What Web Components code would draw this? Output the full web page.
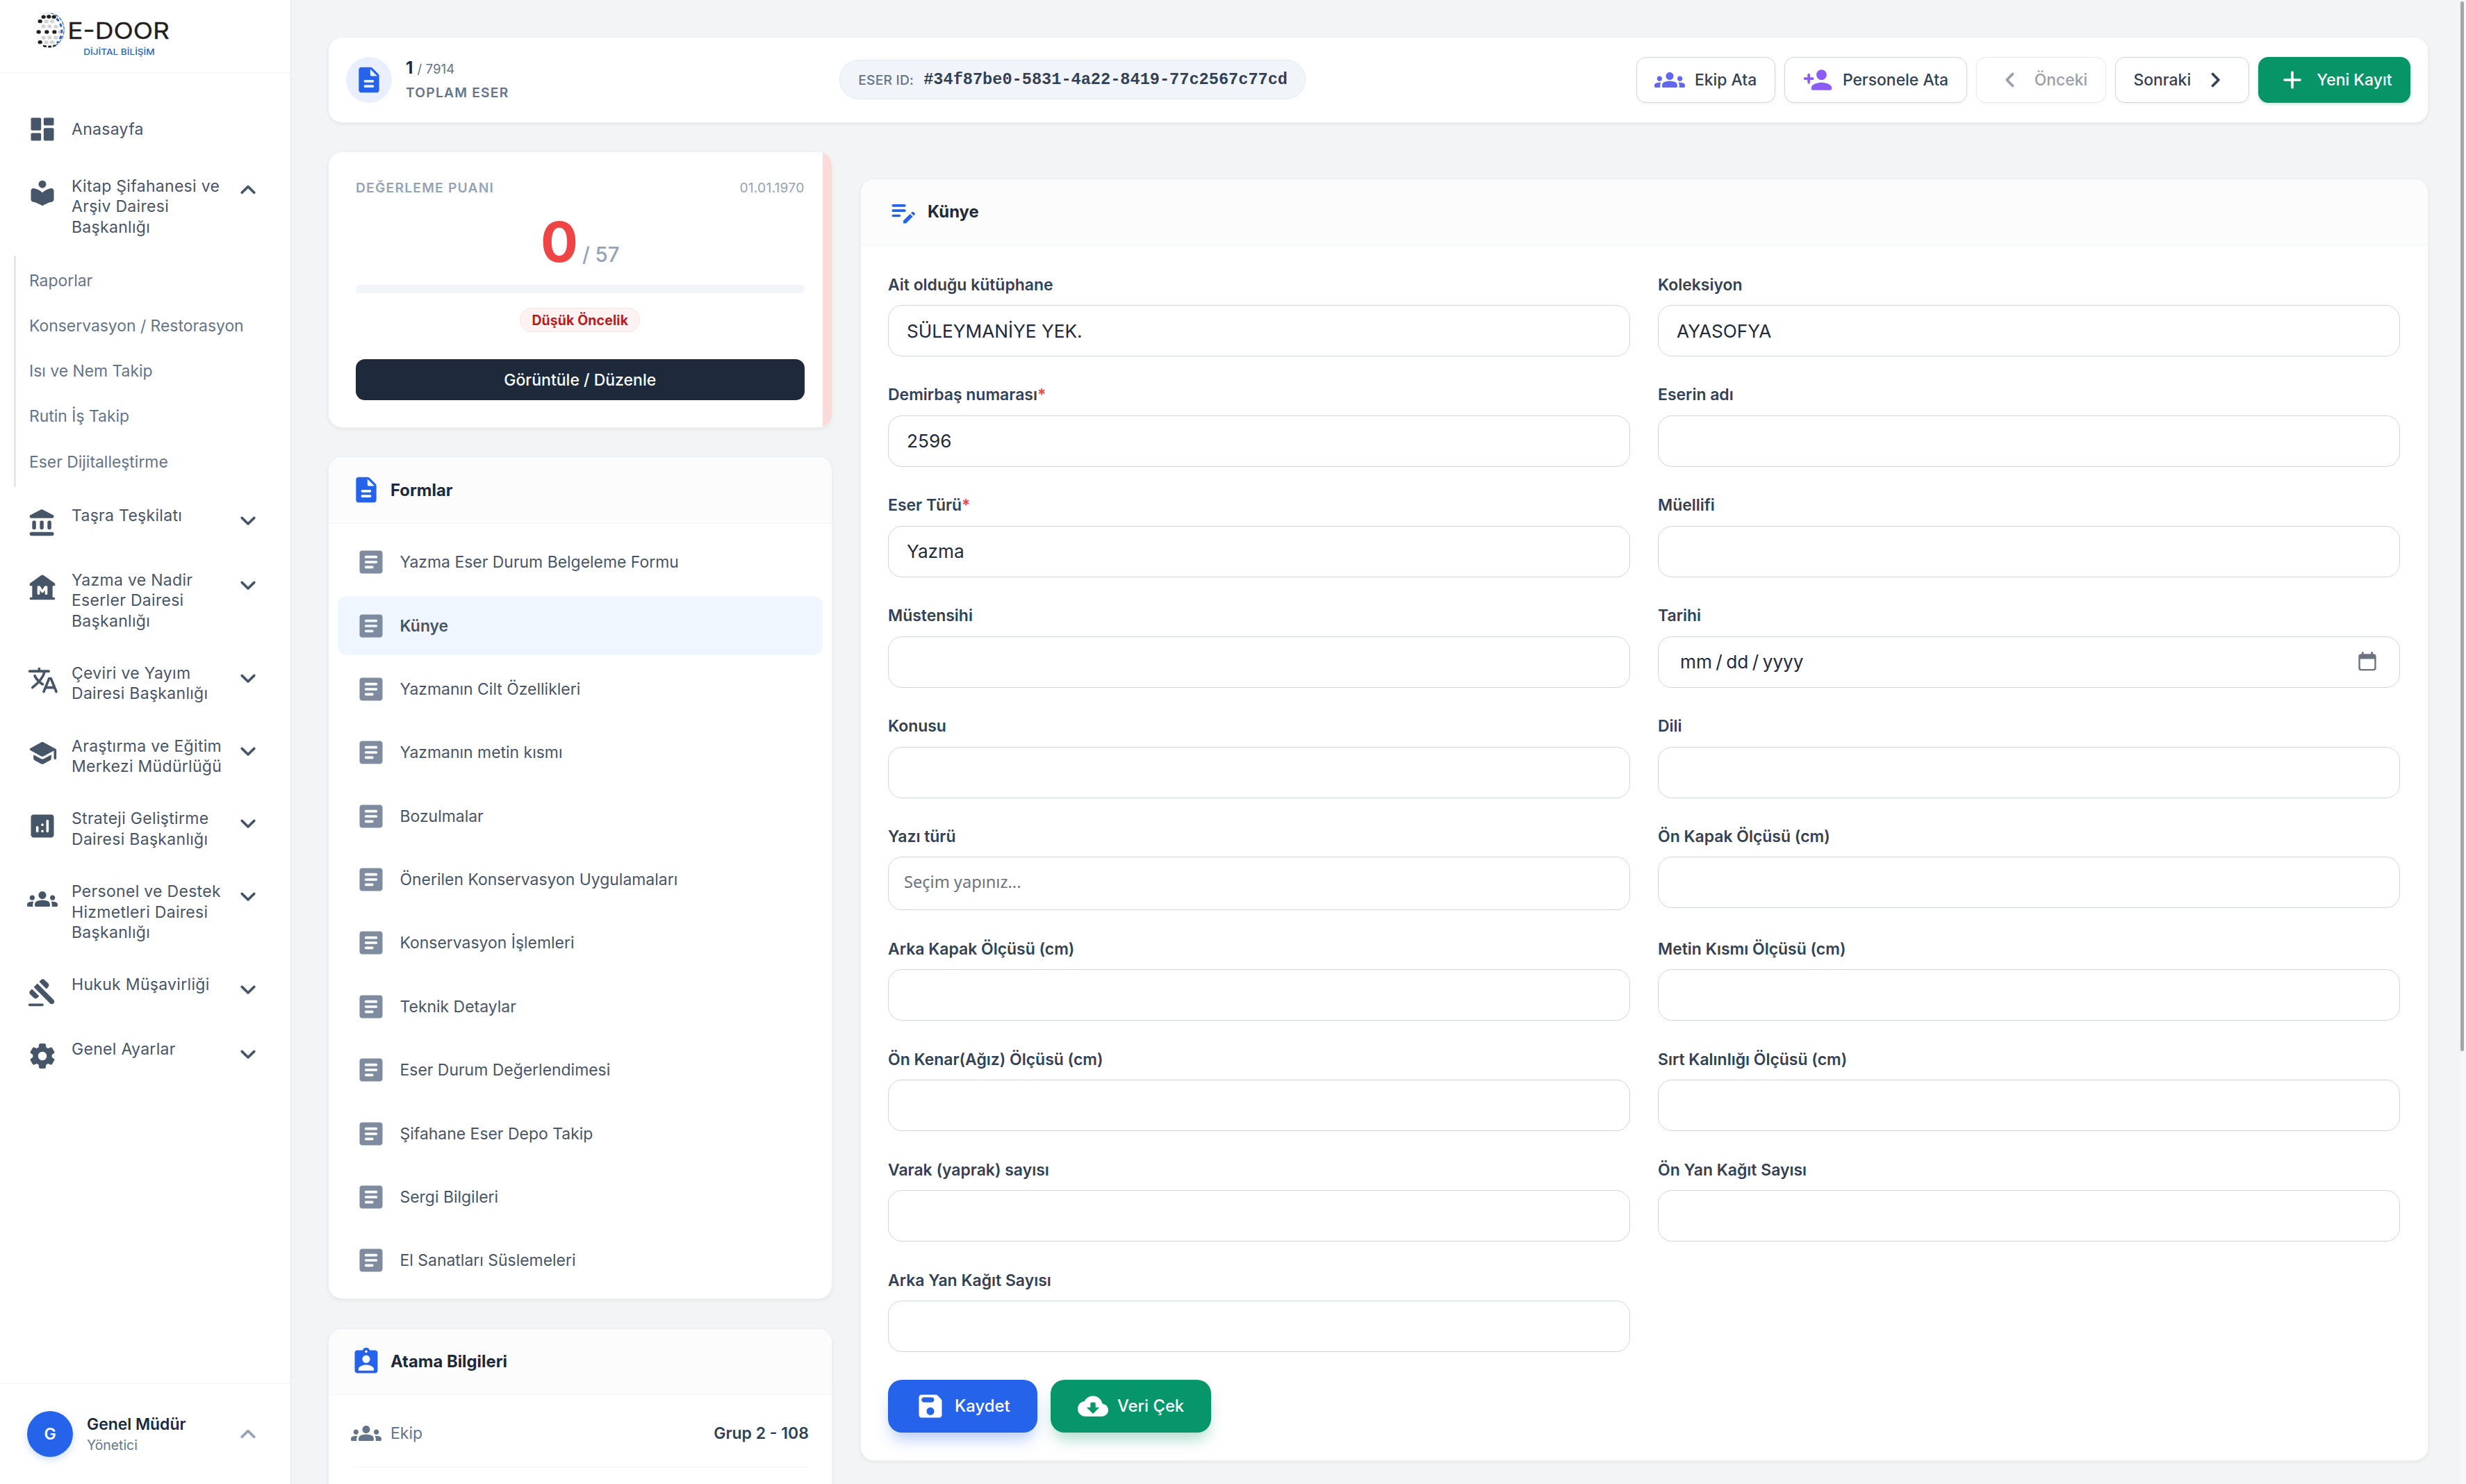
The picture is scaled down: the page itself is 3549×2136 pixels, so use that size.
<!DOCTYPE html>
<html lang="tr"><head><meta charset="utf-8"><title>Künye</title>
<style>
html,body{margin:0;height:100%}
body{background:#f3f4f6;font-family:Inter,"Liberation Sans",sans-serif;overflow:hidden;color:#1e293b}
</style></head>
<body>
<app-shell>
  <side-bar slot="side">
    <nav-item icon="dashboard" single>Anasayfa</nav-item>
    <nav-item icon="library" open>Kitap Şifahanesi ve Arşiv Dairesi Başkanlığı</nav-item>
    <nav-sub>
      <a>Raporlar</a><a>Konservasyon / Restorasyon</a><a>Isı ve Nem Takip</a><a>Rutin İş Takip</a><a>Eser Dijitalleştirme</a>
    </nav-sub>
    <nav-item icon="bank">Taşra Teşkilatı</nav-item>
    <nav-item icon="museum">Yazma ve Nadir Eserler Dairesi Başkanlığı</nav-item>
    <nav-item icon="translate">Çeviri ve Yayım Dairesi Başkanlığı</nav-item>
    <nav-item icon="school">Araştırma ve Eğitim Merkezi Müdürlüğü</nav-item>
    <nav-item icon="analytics">Strateji Geliştirme Dairesi Başkanlığı</nav-item>
    <nav-item icon="groups">Personel ve Destek Hizmetleri Dairesi Başkanlığı</nav-item>
    <nav-item icon="gavel">Hukuk Müşavirliği</nav-item>
    <nav-item icon="settings">Genel Ayarlar</nav-item>
  </side-bar>
  <record-bar slot="bar"></record-bar>
  <score-card slot="left"></score-card>
  <panel-card slot="left" icon="description" heading="Formlar">
    <form-list>
      <form-link>Yazma Eser Durum Belgeleme Formu</form-link>
      <form-link active>Künye</form-link>
      <form-link>Yazmanın Cilt Özellikleri</form-link>
      <form-link>Yazmanın metin kısmı</form-link>
      <form-link>Bozulmalar</form-link>
      <form-link>Önerilen Konservasyon Uygulamaları</form-link>
      <form-link>Konservasyon İşlemleri</form-link>
      <form-link>Teknik Detaylar</form-link>
      <form-link>Eser Durum Değerlendimesi</form-link>
      <form-link>Şifahane Eser Depo Takip</form-link>
      <form-link>Sergi Bilgileri</form-link>
      <form-link>El Sanatları Süslemeleri</form-link>
    </form-list>
  </panel-card>
  <panel-card slot="left" icon="assignment" heading="Atama Bilgileri">
    <info-row icon="groups" label="Ekip">Grup 2 - 108</info-row>
  </panel-card>
  <panel-card slot="main" wide icon="editnote" heading="Künye">
    <form-grid>
      <form-field label="Ait olduğu kütüphane">SÜLEYMANİYE YEK.</form-field>
      <form-field label="Koleksiyon">AYASOFYA</form-field>
      <form-field label="Demirbaş numarası" required>2596</form-field>
      <form-field label="Eserin adı"></form-field>
      <form-field label="Eser Türü" required>Yazma</form-field>
      <form-field label="Müellifi"></form-field>
      <form-field label="Müstensihi"></form-field>
      <form-field label="Tarihi" kind="date">mm / dd / yyyy</form-field>
      <form-field label="Konusu"></form-field>
      <form-field label="Dili"></form-field>
      <form-field label="Yazı türü" kind="select">Seçim yapınız...</form-field>
      <form-field label="Ön Kapak Ölçüsü (cm)"></form-field>
      <form-field label="Arka Kapak Ölçüsü (cm)"></form-field>
      <form-field label="Metin Kısmı Ölçüsü (cm)"></form-field>
      <form-field label="Ön Kenar(Ağız) Ölçüsü (cm)"></form-field>
      <form-field label="Sırt Kalınlığı Ölçüsü (cm)"></form-field>
      <form-field label="Varak (yaprak) sayısı"></form-field>
      <form-field label="Ön Yan Kağıt Sayısı"></form-field>
      <form-field label="Arka Yan Kağıt Sayısı"></form-field>
    </form-grid>
    <form-actions>
      <action-button icon="save">Kaydet</action-button>
      <action-button icon="cloud" green>Veri Çek</action-button>
    </form-actions>
  </panel-card>
</app-shell>
<script>
const ICONS = {
  dashboard: '<rect x="3" y="3" width="8" height="10" rx="1"/><rect x="3" y="15" width="8" height="6" rx="1"/><rect x="13" y="11" width="8" height="10" rx="1"/><rect x="13" y="3" width="8" height="6" rx="1"/>',
  library: '<circle cx="12" cy="5" r="3"/><path d="M12 11.55c-1.82-1.7-4.12-2.89-6.68-3.35C4.11 8 3 8.98 3 10.22v6.7c0 1.04.8 1.85 1.83 1.97 2.54.3 5 1.8 7.17 3.1 2.17-1.3 4.63-2.8 7.17-3.1 1.03-.12 1.83-.93 1.83-1.97v-6.7c0-1.24-1.11-2.22-2.32-2.02-2.56.46-4.86 1.65-6.68 3.35z"/>',
  bank: '<rect x="4" y="10" width="3" height="7" rx="1.5"/><rect x="10" y="10" width="3" height="7" rx="1.5"/><rect x="16" y="10" width="3" height="7" rx="1.5"/><rect x="2" y="19" width="19" height="3" rx="1.5"/><path d="M10.57 1.49l-7.9 4.16c-.41.21-.67.64-.67 1.1C2 7.44 2.56 8 3.25 8h16.51C20.44 8 21 7.44 21 6.75c0-.46-.26-.89-.67-1.1l-7.9-4.16c-.58-.31-1.28-.31-1.86 0z"/>',
  museum: '<path fill-rule="evenodd" d="M22 10.4V9.8c0-.4-.2-.7-.5-.9L12.9 2.7c-.5-.4-1.2-.4-1.8 0L2.5 8.9c-.3.2-.5.5-.5.9v.6c0 .4.3.7.7.7H4V20H3c-.6 0-1 .4-1 1s.4 1 1 1h18c.6 0 1-.4 1-1s-.4-1-1-1h-1v-8.9h1.3c.4 0 .7-.3.7-.7zM15 18c-.55 0-1-.45-1-1v-2.7l-1.17 1.75c-.4.6-1.27.6-1.66 0L10 14.3V17c0 .55-.45 1-1 1s-1-.45-1-1v-5c0-.55.45-1 1-1h.5c.3 0 .6.2.8.4L12 14l1.7-2.6c.2-.2.5-.4.8-.4h.5c.55 0 1 .45 1 1v5c0 .55-.45 1-1 1z"/>',
  translate: '<path d="M2 5h15M9.5 3v2M13.7 5.5C12.7 9.5 9 14 4.2 17.8M6 8.6c1.6 3 3.6 5 6.2 6.6" fill="none" stroke="currentColor" stroke-width="2" stroke-linecap="round"/><path d="M13.1 21l4.2-10.3h1.4L22.9 21M14.8 17.8h6.5" fill="none" stroke="currentColor" stroke-width="2" stroke-linecap="round" stroke-linejoin="round"/>',
  school: '<path d="M5 13.18v2.81c0 .73.4 1.41 1.04 1.76l5 2.73c.6.33 1.32.33 1.92 0l5-2.73c.64-.35 1.04-1.03 1.04-1.76v-2.81l-6.04 3.3c-.6.33-1.32.33-1.92 0L5 13.18zm6.04-9.66l-8.43 4.6c-.69.38-.69 1.38 0 1.76l8.43 4.6c.6.33 1.32.33 1.92 0L21 10.09V16c0 .55.45 1 1 1s1-.45 1-1V9.59c0-.37-.2-.7-.52-.88l-9.52-5.19c-.6-.32-1.32-.32-1.92 0z"/>',
  analytics: '<path fill-rule="evenodd" d="M19 3H5c-1.1 0-2 .9-2 2v14c0 1.1.9 2 2 2h14c1.1 0 2-.9 2-2V5c0-1.1-.9-2-2-2zM8 17c-.55 0-1-.45-1-1v-3c0-.55.45-1 1-1s1 .45 1 1v3c0 .55-.45 1-1 1zm4 0c-.55 0-1-.45-1-1s.45-1 1-1 1 .45 1 1-.45 1-1 1zm0-5c-.55 0-1-.45-1-1s.45-1 1-1 1 .45 1 1-.45 1-1 1zm4 5c-.55 0-1-.45-1-1V8c0-.55.45-1 1-1s1 .45 1 1v8c0 .55-.45 1-1 1z"/>',
  groups: '<path d="M12 12.75c1.63 0 3.07.39 4.24.9 1.08.48 1.76 1.56 1.76 2.73V17c0 .55-.45 1-1 1H7c-.55 0-1-.45-1-1v-.61c0-1.18.68-2.26 1.76-2.73 1.17-.52 2.61-.91 4.24-.91zM4 13c1.1 0 2-.9 2-2s-.9-2-2-2-2 .9-2 2 .9 2 2 2zm1.13 1.1c-.37-.06-.74-.1-1.13-.1-.99 0-1.93.21-2.78.58C.48 14.9 0 15.62 0 16.43V17c0 .55.45 1 1 1h3.5v-1.61c0-.83.23-1.61.63-2.29zM20 13c1.1 0 2-.9 2-2s-.9-2-2-2-2 .9-2 2 .9 2 2 2zm4 3.43c0-.81-.48-1.53-1.22-1.85-.85-.37-1.79-.58-2.78-.58-.39 0-.76.04-1.13.1.4.68.63 1.46.63 2.29V18H23c.55 0 1-.45 1-1v-.57zM12 6c1.66 0 3 1.34 3 3s-1.34 3-3 3-3-1.34-3-3 1.34-3 3-3z"/>',
  gavel: '<path d="M2 21h10c.55 0 1 .45 1 1s-.45 1-1 1H2c-.55 0-1-.45-1-1s.45-1 1-1zM5.24 8.07l2.83-2.83 12.73 12.73c.78.78.78 2.05 0 2.83-.78.78-2.05.78-2.83 0L5.24 8.07zM13.73 2.41l2.83 2.83c.78.78.78 2.05 0 2.83l-1.42 1.42L9.48 3.83l1.42-1.42c.78-.78 2.05-.78 2.83 0zM3.83 9.48l5.66 5.66-1.42 1.42c-.78.78-2.05.78-2.83 0L2.41 13.73c-.78-.78-.78-2.05 0-2.83l1.42-1.42z"/>',
  settings: '<path d="M19.14 12.94c.04-.3.06-.61.06-.94 0-.32-.02-.64-.07-.94l2.03-1.58c.18-.14.23-.41.12-.61l-1.92-3.32c-.12-.22-.37-.29-.59-.22l-2.39.96c-.5-.38-1.03-.7-1.62-.94l-.36-2.54c-.04-.24-.24-.41-.48-.41h-3.84c-.24 0-.43.17-.47.41l-.36 2.54c-.59.24-1.13.57-1.62.94l-2.39-.96c-.22-.08-.47 0-.59.22L2.74 8.87c-.12.21-.08.47.12.61l2.03 1.58c-.05.3-.09.63-.09.94s.02.64.07.94l-2.03 1.58c-.18.14-.23.41-.12.61l1.92 3.32c.12.22.37.29.59.22l2.39-.96c.5.38 1.03.7 1.62.94l.36 2.54c.05.24.24.41.48.41h3.84c.24 0 .44-.17.47-.41l.36-2.54c.59-.24 1.13-.56 1.62-.94l2.39.96c.22.08.47 0 .59-.22l1.92-3.32c.12-.22.07-.47-.12-.61l-2.01-1.58zM12 15.6c-1.98 0-3.6-1.62-3.6-3.6s1.62-3.6 3.6-3.6 3.6 1.62 3.6 3.6-1.62 3.6-3.6 3.6z" stroke="currentColor" stroke-width=".5" stroke-linejoin="round"/>',
  description: '<path d="M14.59 2.59c-.38-.38-.89-.59-1.42-.59H6c-1.1 0-2 .9-2 2v16c0 1.1.89 2 1.99 2H18c1.1 0 2-.9 2-2V8.83c0-.53-.21-1.04-.59-1.41l-4.82-4.83zM15 18H9c-.55 0-1-.45-1-1s.45-1 1-1h6c.55 0 1 .45 1 1s-.45 1-1 1zm0-4H9c-.55 0-1-.45-1-1s.45-1 1-1h6c.55 0 1 .45 1 1s-.45 1-1 1zm-2-6V3.5L18.5 9H14c-.55 0-1-.45-1-1z"/>',
  article: '<path d="M19 3H5c-1.1 0-2 .9-2 2v14c0 1.1.9 2 2 2h14c1.1 0 2-.9 2-2V5c0-1.1-.9-2-2-2zm-6 14H8c-.55 0-1-.45-1-1s.45-1 1-1h5c.55 0 1 .45 1 1s-.45 1-1 1zm3-4H8c-.55 0-1-.45-1-1s.45-1 1-1h8c.55 0 1 .45 1 1s-.45 1-1 1zm0-4H8c-.55 0-1-.45-1-1s.45-1 1-1h8c.55 0 1 .45 1 1s-.45 1-1 1z"/>',
  personadd: '<path d="M15 12c2.21 0 4-1.79 4-4s-1.79-4-4-4-4 1.79-4 4 1.79 4 4 4zm-9-2V8c0-.55-.45-1-1-1s-1 .45-1 1v2H2c-.55 0-1 .45-1 1s.45 1 1 1h2v2c0 .55.45 1 1 1s1-.45 1-1v-2h2c.55 0 1-.45 1-1s-.45-1-1-1H6zm9 4c-2.67 0-8 1.34-8 4v1c0 .55.45 1 1 1h14c.55 0 1-.45 1-1v-1c0-2.66-5.33-4-8-4z"/>',
  save: '<path d="M17.59 3.59c-.38-.38-.89-.59-1.42-.59H5c-1.11 0-2 .9-2 2v14c0 1.1.9 2 2 2h14c1.1 0 2-.9 2-2V7.83c0-.53-.21-1.04-.59-1.41l-2.82-2.83zM12 19c-1.66 0-3-1.34-3-3s1.34-3 3-3 3 1.34 3 3-1.34 3-3 3zm1-10H7c-1.1 0-2-.9-2-2s.9-2 2-2h6c1.1 0 2 .9 2 2s-.9 2-2 2z"/>',
  cloud: '<path d="M19.35 10.04C18.67 6.59 15.64 4 12 4 9.11 4 6.6 5.64 5.35 8.04 2.34 8.36 0 10.91 0 14c0 3.31 2.69 6 6 6h13c2.76 0 5-2.24 5-5 0-2.64-2.05-4.78-4.65-4.96zM17 13l-4.65 4.65c-.2.2-.51.2-.71 0L7 13h3v-3c0-.55.45-1 1-1h2c.55 0 1 .45 1 1v3h3z"/>',
  assignment: '<path d="M19 3h-4.18C14.4 1.84 13.3 1 12 1s-2.4.84-2.82 2H5c-1.1 0-2 .9-2 2v14c0 1.1.9 2 2 2h14c1.1 0 2-.9 2-2V5c0-1.1-.9-2-2-2zm-7 0c.55 0 1 .45 1 1s-.45 1-1 1-1-.45-1-1 .45-1 1-1zm0 4c1.66 0 3 1.34 3 3s-1.34 3-3 3-3-1.34-3-3 1.34-3 3-3zm6 12H6v-1.4c0-2 4-3.1 6-3.1s6 1.1 6 3.1V19z"/>',
  editnote: '<path d="M14 11c0 .55-.45 1-1 1H4c-.55 0-1-.45-1-1s.45-1 1-1h9c.55 0 1 .45 1 1zM3 7c0 .55.45 1 1 1h9c.55 0 1-.45 1-1s-.45-1-1-1H4c-.55 0-1 .45-1 1zm7 8c0-.55-.45-1-1-1H4c-.55 0-1 .45-1 1s.45 1 1 1h5c.55 0 1-.45 1-1zm8.01-2.13l.71-.71c.39-.39 1.02-.39 1.41 0l.71.71c.39.39.39 1.02 0 1.41l-.71.71-2.12-2.12zm-.71.71l-5.16 5.16c-.09.09-.14.21-.14.35v1.41c0 .28.22.5.5.5h1.41c.13 0 .26-.05.35-.15l5.16-5.16-2.12-2.12z"/>',
  down: '<path d="M7.2 10l4.8 4.7 4.8-4.7" fill="none" stroke="currentColor" stroke-width="2" stroke-linecap="round" stroke-linejoin="round"/>',
  up: '<path d="M7.2 14.3L12 9.6l4.8 4.7" fill="none" stroke="currentColor" stroke-width="2" stroke-linecap="round" stroke-linejoin="round"/>',
  left: '<path d="M14.5 7.4L9.9 12l4.6 4.6" fill="none" stroke="currentColor" stroke-width="2" stroke-linecap="round" stroke-linejoin="round"/>',
  right: '<path d="M9.5 7.4l4.6 4.6-4.6 4.6" fill="none" stroke="currentColor" stroke-width="2" stroke-linecap="round" stroke-linejoin="round"/>',
  plus: '<path d="M12 6v12M6 12h12" fill="none" stroke="currentColor" stroke-width="2" stroke-linecap="round"/>',
  calendar: '<path fill-rule="evenodd" d="M7 1.5c.8 0 1 .6 1 1V4h8V2.5c0-.6.4-1 1-1s1 .4 1 1V4h1c1.300 0 2.5 1.100 2.5 2.5v13c0 1.400-1.200 2.5-2.5 2.5H5c-1.400 0-2.500-1.100-2.500-2.5v-13C2.500 5.100 3.600 4 5 4h1V2.500c0-.4.3-1 1-1zM4.300 9.300v9.700c0 .7.5 1.200 1.200 1.200h13c.7 0 1.200-.5 1.200-1.200V9.300z"/>'
};
const define = (tag, html) => customElements.define(tag, class extends HTMLElement {
  constructor() {
    super();
    this.attachShadow({ mode: 'open' });
  }
  connectedCallback() {
    if (this.shadowRoot.childNodes.length) return;
    const t = document.createElement('template');
    t.innerHTML = typeof html === 'function' ? html(this) : html;
    this.shadowRoot.append(t.content.cloneNode(true));
  }
});

define('ui-icon', el => `<style>:host{display:block;flex:none;width:44px;height:44px}svg{display:block;width:100%;height:100%;fill:currentColor}</style>
<svg viewBox="0 0 24 24" aria-hidden="true">${ICONS[el.getAttribute('name')]}</svg>`);

define('app-shell', `<style>
:host{display:flex;height:2136px;position:relative;overflow:hidden}
main{flex:1;min-width:0;display:flex;flex-direction:column;gap:41px;padding:53px 54px 0 53px}
.cols{display:flex;align-items:flex-start;gap:40px;flex:none}
.left{display:flex;flex-direction:column;gap:41.5px;width:726px;flex:none}
.main{flex:1;min-width:0;padding-top:39px}
.thumb{position:absolute;right:3px;top:2px;width:5px;height:1511px;border-radius:3px;background:#a3a5a8}
.track{position:absolute;right:0;top:0;width:8px;height:100%;background:#f6f7f8}
</style>
<slot name="side"></slot>
<main><slot name="bar"></slot><div class="cols"><div class="left"><slot name="left"></slot></div><div class="main"><slot name="main"></slot></div></div></main>
<div class="track"></div><div class="thumb"></div>`);

define('brand-logo', () => {
  const dot = (x, y, f) => `<ellipse cx="${x}" cy="${y}" rx="9.500" ry="8" fill="${f}"/>`;
  const k = '#231f20', g = '#d3d4d6';
  return `<style>:host{display:block}svg{display:block;width:214px;height:80px}</style>
<svg viewBox="0 0 642 240" aria-label="E-DOOR">
<g>${[[80,63],[105,62],[68,84],[94,84],[121,85],[139,108],[68,133],[94,132],[121,132],[80,153],[105,152]].map(p => dot(p[0], p[1], g)).join('')}
${[[68,43],[91,42],[113,43],[53,62],[47,108],[82,108],[115,108],[53,152]].map(p => dot(p[0], p[1], k)).join('')}
<path d="M66 32q12-6 28-5" stroke="${g}" stroke-width="4" fill="none" stroke-dasharray="12 4"/>
<path d="M66 167q26 9 54-1" stroke="${k}" stroke-width="8" fill="none" stroke-dasharray="15 7"/>
<path d="M98 27c72 12 80 114 10 146" stroke="#2b62bb" stroke-width="3.500" fill="none" stroke-dasharray="16 5"/>
<path d="M124 50c28 26 32 74 2 106" stroke="#2b62bb" stroke-width="9" fill="none" stroke-dasharray="15 12"/></g>
<text x="172" y="138" font-family="Inter,sans-serif" font-size="98" font-weight="400" fill="${k}" stroke="${k}" stroke-width="1" textLength="440" lengthAdjust="spacingAndGlyphs">E-DOOR</text>
<text x="241" y="206" font-family="Inter,sans-serif" font-size="35" font-weight="500" fill="#2b62bb" textLength="307" lengthAdjust="spacingAndGlyphs">DİJİTAL BİLİŞİM</text>
</svg>`;
});

define('side-bar', `<style>
:host{display:flex;flex-direction:column;flex:none;width:418px;height:100%;background:#fff;border-right:1px solid #e5e7eb}
header{border-bottom:1px solid #f1f3f5;box-sizing:border-box;height:105px;padding:10px 0 0 40px}
nav{flex:1;padding-top:35.5px}
footer{height:145px;box-sizing:border-box;border-top:1px solid #f1f3f5;padding:0 39px;display:flex;align-items:center;gap:20px}
.av{width:66px;height:66px;border-radius:50%;background:#2563eb;color:#fff;font-size:23px;font-weight:600;display:flex;align-items:center;justify-content:center;box-shadow:0 4px 11px rgba(37,99,235,.22)}
.who{flex:1;display:flex;flex-direction:column;gap:3px}
b{font-size:22.9px;line-height:29px;font-weight:600;color:#1e293b}
small{font-size:19.4px;line-height:25px;color:#64748b}
ui-icon{color:#94a3b8}
</style>
<header><brand-logo></brand-logo></header>
<nav><slot></slot></nav>
<footer><span class="av">G</span><span class="who"><b>Genel Müdür</b><small>Yönetici</small></span><ui-icon name="up"></ui-icon></footer>`);

define('nav-item', el => `<style>
:host{display:flex;align-items:flex-start;box-sizing:border-box;min-height:92px;padding:23.3px 39px 22.6px;color:#475569;font-size:23px;line-height:29.4px;letter-spacing:.3px}
:host([single]){height:90px;min-height:0;padding:0 39px;align-items:center}
:host([single]) .i{margin-top:0}
:host([single]) span{padding-top:2px}
.i{margin:2.5px 20px 0 0}
.c{margin-top:-1px}
:host([open]) .c{margin-top:-2.5px}
span{flex:1;padding-right:4px}
</style><ui-icon class="i" name="${el.getAttribute('icon')}"></ui-icon><span><slot></slot></span>${el.hasAttribute('single') ? '' : `<ui-icon class="c" name="${el.hasAttribute('open') ? 'up' : 'down'}"></ui-icon>`}`);

define('nav-sub', `<style>
:host{display:flex;flex-direction:column;margin:3px 0 4.5px 20px;padding:3.3px 0;border-left:3px solid #e5e7eb;color:#64748b;font-size:22.9px}
::slotted(a){display:flex;align-items:center;height:65.3px;padding-left:19px}
</style><slot></slot>`);

define('tool-button', el => `<style>
:host{display:flex;align-items:center;gap:13.5px;height:66px;box-sizing:border-box;padding:0 25.5px;border:1px solid #d1d5db;border-radius:14px;background:#fff;color:#334155;font-size:22.9px;font-weight:500;box-shadow:0 2px 4px rgba(0,0,0,.05);white-space:nowrap}
:host([muted]){opacity:.5}
:host([primary]){background:#079467;border-color:#079467;color:#fff;box-shadow:0 2px 5px rgba(5,150,105,.25)}
</style>${el.hasAttribute('after') ? '<slot></slot>' : ''}<ui-icon name="${el.getAttribute('icon')}" style="color:${el.getAttribute('tint') || 'inherit'}"></ui-icon>${el.hasAttribute('after') ? '' : '<slot></slot>'}`);

define('record-bar', `<style>
:host{display:flex;flex:none;align-items:center;justify-content:space-between;height:123.5px;box-sizing:border-box;padding:0 25px;background:#fff;border:1px solid #eceef1;border-radius:20px;box-shadow:0 2px 5px rgba(0,0,0,.06)}
.n{display:flex;align-items:center;gap:20px}
.c{width:66px;height:66px;border-radius:50%;background:#e9effd;color:#2563eb;display:flex;align-items:center;justify-content:center}
.t{display:flex;flex-direction:column;gap:7px}
.l{font-size:18.7px;line-height:28px;color:#64748b}
b{font-size:24px;color:#1e293b;font-weight:700;margin-right:1px}
.u{font-size:19.25px;line-height:24px;font-weight:600;letter-spacing:1.2px;color:#64748b}
.id{display:flex;align-items:center;gap:14px;height:57px;box-sizing:border-box;padding:0 25px 0 26px;border:1px solid #e2e8f0;border-radius:29px;background:#f1f5f9}
.id span{font-size:19.25px;font-weight:500;letter-spacing:.2px;color:#64748b}
.id code{font:700 23.6px/28px "Liberation Mono",monospace;color:#334155}
.b{display:flex;gap:13.2px}
</style>
<div class="n"><span class="c"><ui-icon name="description"></ui-icon></span><span class="t"><span class="l"><b>1</b> / 7914</span><span class="u">TOPLAM ESER</span></span></div>
<div class="id"><span>ESER ID:</span><code>#34f87be0-5831-4a22-8419-77c2567c77cd</code></div>
<div class="b"><tool-button icon="groups" tint="#6366f1">Ekip Ata</tool-button><tool-button icon="personadd" tint="#8b5cf6">Personele Ata</tool-button><tool-button icon="left" muted>Önceki</tool-button><tool-button icon="right" after>Sonraki</tool-button><tool-button icon="plus" primary>Yeni Kayıt</tool-button></div>`);

define('score-card', `<style>
:host{display:flex;height:398px;box-sizing:border-box;background:#fff;border:1px solid #eceef1;border-radius:20px;box-shadow:0 2px 5px rgba(0,0,0,.06);overflow:hidden}
.m{flex:1;display:flex;flex-direction:column;padding:39px 26px 0 39px}
.edge{width:13.5px;background:#fbdada}
.h{display:flex;justify-content:space-between;font-size:19.25px;line-height:24px;color:#94a3b8}
.h b{font-weight:600;letter-spacing:1.2px}
.h span{letter-spacing:.2px}
.s{display:flex;justify-content:center;align-items:baseline;gap:7px;height:84px;margin-top:24.5px;color:#94a3b8;font-size:29.3px;line-height:1;font-weight:500}
.s b{font-size:80px;line-height:84px;font-weight:700;color:#ef4444;letter-spacing:-1px}
.bar{height:12.5px;border-radius:7px;background:#f1f5f9;margin-top:19.5px}
.bd{align-self:center;margin-top:21px;height:35px;box-sizing:border-box;padding:0 16px;border:1px solid #fee2e2;border-radius:18px;background:#fef2f2;color:#b91c1c;font-size:19.5px;font-weight:700;letter-spacing:.1px;line-height:34px}
.go{margin-top:39px;height:59px;border-radius:13px;background:#1e293b;color:#fff;font-size:23px;font-weight:500;display:flex;align-items:center;justify-content:center}
</style>
<div class="m"><div class="h"><b>DEĞERLEME PUANI</b><span>01.01.1970</span></div>
<div class="s"><b>0</b><span>/ 57</span></div>
<div class="bar"></div><div class="bd">Düşük Öncelik</div><div class="go">Görüntüle / Düzenle</div></div><div class="edge"></div>`);

define('panel-card', el => `<style>
:host{display:block;background:#fff;border:1px solid #eceef1;border-radius:20px;box-shadow:0 2px 5px rgba(0,0,0,.06);overflow:hidden}
:host([wide]){height:1846px;box-sizing:border-box}
header{display:flex;align-items:center;gap:13px;height:94.5px;padding:0 32px;background:#fcfcfd;border-bottom:1px solid #f1f3f5;font-size:23.8px;font-weight:700;color:#1e293b}
:host([wide]) header{padding:0 39px}
ui-icon{color:#2563eb}
</style><header><ui-icon name="${el.getAttribute('icon')}"></ui-icon>${el.getAttribute('heading')}</header><slot></slot>`);

define('form-list', `<style>:host{display:flex;flex-direction:column;gap:6.1px;padding:13px 13px 12px}</style><slot></slot>`);
define('form-link', `<style>
:host{display:flex;align-items:center;gap:19.5px;height:85.3px;padding-left:26px;border-radius:13px;color:#475569;font-size:22.95px}
:host([active]){background:#eff6ff;font-weight:600}
ui-icon{color:#64748b;opacity:.82}
</style><ui-icon name="article"></ui-icon><slot></slot>`);

define('info-row', el => `<style>
:host{display:flex;align-items:center;gap:13px;height:104px;box-sizing:border-box;padding-top:7px;margin:0 33px 120px 32px;border-bottom:1px solid #f1f3f5;font-size:23px;color:#64748b}
b{margin-left:auto;font-weight:600;color:#334155}
</style><ui-icon name="${el.getAttribute('icon')}"></ui-icon>${el.getAttribute('label')}<b><slot></slot></b>`);

define('form-grid', `<style>:host{display:grid;grid-template-columns:1fr 1fr;column-gap:40px;row-gap:39.4px;padding:40.5px 40px 0 39px;align-items:start}</style><slot></slot>`);
define('form-field', el => {
  const kind = el.getAttribute('kind');
  return `<style>
:host{display:block}
label{display:block;font-size:22.95px;line-height:32px;font-weight:600;color:#334155;margin-bottom:13.5px}
i{font-style:normal;color:#ef4444}
.in{display:flex;align-items:center;justify-content:space-between;box-sizing:border-box;height:74px;padding:0 33px 0 26px;border:1px solid #d1d5db;border-radius:20px;background:#fff;color:#1e293b;font-size:26.2px}
.date{padding:0 30px 0 31px;word-spacing:-1.9px}
.select{height:77px;padding:0 22px 6px;font:23.6px "Noto Sans",sans-serif;color:#6b7280}
ui-icon{width:32px;height:32px;color:#6b7280;margin-bottom:2px}
</style><label>${el.getAttribute('label')}${el.hasAttribute('required') ? '<i>*</i>' : ''}</label><div class="in ${kind || ''}"><span><slot></slot></span>${kind === 'date' ? '<ui-icon name="calendar"></ui-icon>' : ''}</div>`;
});

define('form-actions', `<style>:host{display:flex;gap:19.5px;padding:39.5px 39px}</style><slot></slot>`);
define('action-button', el => `<style>
:host{display:flex;align-items:center;gap:13px;height:76px;padding:0 39px;border-radius:20px;background:#2563eb;color:#fff;font-size:23.8px;font-weight:500;box-shadow:0 14px 22px -5px rgba(37,99,235,.34)}
:host([green]){background:#079669;box-shadow:0 14px 22px -5px rgba(5,150,105,.34)}
</style><ui-icon name="${el.getAttribute('icon')}"></ui-icon><slot></slot>`);
</script></body></html>
